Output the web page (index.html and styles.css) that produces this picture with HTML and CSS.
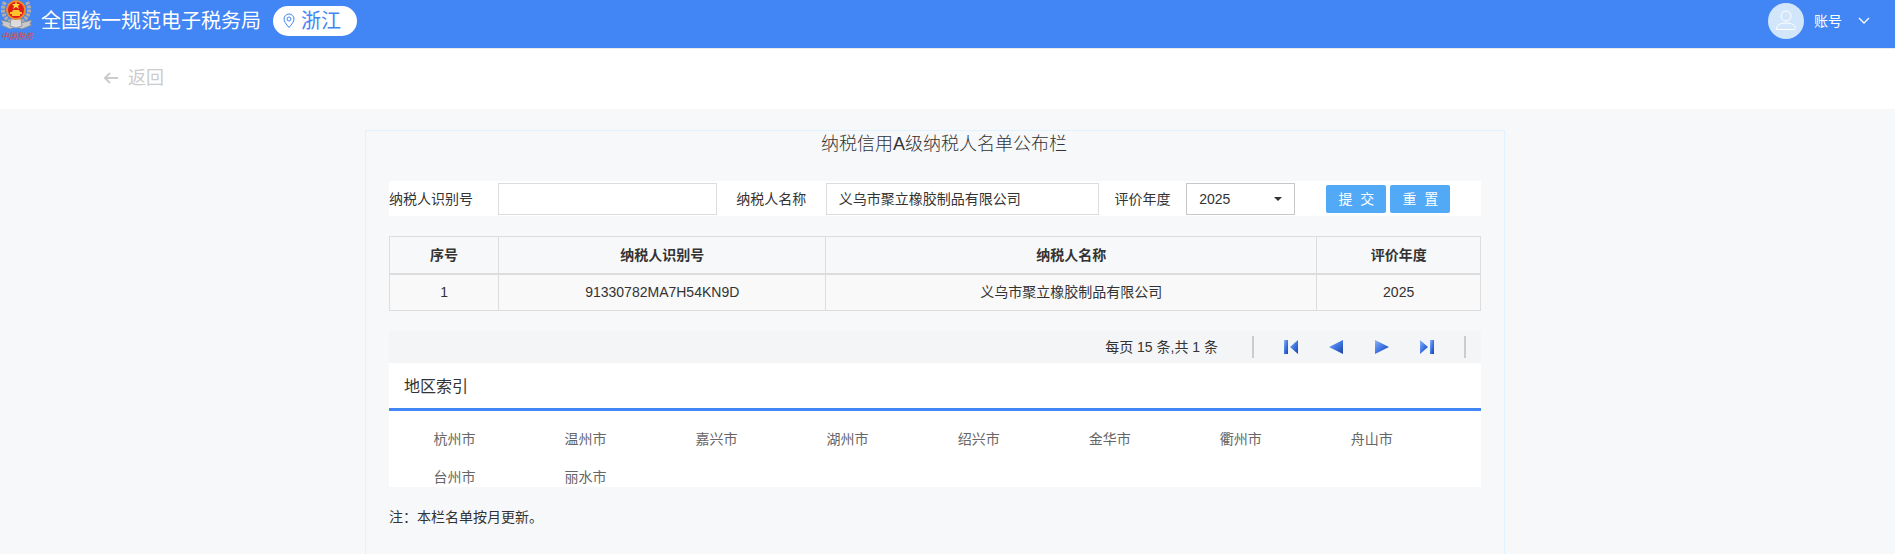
FILE: index.html
```html
<!DOCTYPE html>
<html lang="zh-CN">
<head>
  <meta charset="UTF-8" />
  <title>纳税信用A级纳税人名单公布栏</title>
  <link rel="stylesheet" href="styles.css">
</head>
<body>

  <header class="header">
    <svg class="emblem" viewBox="0 0 34 42" width="34" height="42">
      <path d="M5 2C0 11 4 20 16 25C28 20 32 11 27 2" fill="none" stroke="#b3aca6" stroke-width="4" stroke-dasharray="3 1" />
      <path d="M1 20l8 2 7 2 8-2 8-2-2 4 2 1-10 4-6-2-6 2-9-4 2-1z" fill="#c9c9cb" stroke="#858b98" stroke-width="1" />
      <path d="M11 19h10l1 7-6 2-6-2z" fill="#dddbd9" stroke="#969aa3" stroke-width="1" />
      <circle cx="16" cy="10" r="9" fill="#e01e14" stroke="#f08a2b" stroke-width="2" />
      <path d="M16 1l1 3h3l-2 2 1 3-3-2-3 2 1-3-2-2h3z" fill="#ffd83b" />
      <path d="M13 10h6l1 2h2v2h-2v2h-8v-2h-2v-2h2z" fill="#ffc32e" />
      <text class="emblem-text" x="1" y="39">中国税务</text>
    </svg>
    <span class="site-name">全国统一规范电子税务局</span>
    <button class="region" type="button">
      <svg viewBox="0 0 12 16" width="12" height="16" fill="none" stroke="#4285f4">
        <path d="M6 14.500C3 11 1 8.500 1 6a5 5 0 0 1 10 0c0 2.500-2 5-5 8.500z" />
        <circle cx="6" cy="6" r="2" />
      </svg>
      浙江
    </button>
    <button class="account" type="button">
      <svg viewBox="0 0 36 36" width="36" height="36" fill="none" stroke="#fff">
        <circle cx="18" cy="18" r="18" fill="#d2e6fb" stroke="none" />
        <circle cx="18" cy="13" r="5" />
        <path d="M8.500 26.500v-1c0-3.500 4-5.500 9.500-5.500s9.500 2 9.500 5.500c0 .7-.3 1-1 1h-17c-.7 0-1-.3-1-1z" />
      </svg>
      <span>账号</span>
      <svg class="chevron" viewBox="0 0 12 8" width="12" height="8" fill="none" stroke="#fff" stroke-width="1.300">
        <path d="M1 1l5 5 5-5" />
      </svg>
    </button>
  </header>

  <nav class="back-bar">
    <a href="#" class="back">
      <svg viewBox="0 0 14 12" width="14" height="12" fill="none" stroke="#ccc" stroke-width="2">
        <path d="M14 6H1M6 1L1 6l5 5" />
      </svg>
      返回
    </a>
  </nav>

  <main class="container">
    <div class="panel">
      <h1>纳税信用A级纳税人名单公布栏</h1>

      <form class="search">
        <label class="first" for="nsrsbh">纳税人识别号</label>
        <input type="text" id="nsrsbh" />
        <label for="nsrmc">纳税人名称</label>
        <input type="text" id="nsrmc" value="义乌市聚立橡胶制品有限公司" />
        <label for="pjnd">评价年度</label>
        <div class="select-wrap">
          <select id="pjnd">
            <option>2025</option>
            <option>2024</option>
            <option>2023</option>
          </select>
        </div>
        <div class="buttons">
          <button type="button">提&nbsp; 交</button>
          <button type="reset">重&nbsp; 置</button>
        </div>
      </form>

      <table class="result">
        <thead>
          <tr>
            <th class="col-no">序号</th>
            <th class="col-id">纳税人识别号</th>
            <th class="col-name">纳税人名称</th>
            <th class="col-year">评价年度</th>
          </tr>
        </thead>
        <tbody>
          <tr>
            <td>1</td>
            <td>91330782MA7H54KN9D</td>
            <td>义乌市聚立橡胶制品有限公司</td>
            <td>2025</td>
          </tr>
        </tbody>
      </table>

      <div class="pager">
        <span>每页 15 条,共 1 条</span>
        <div class="pager-buttons">
          <svg width="0" height="0" class="defs">
            <linearGradient id="blue" x1="0" y1="0" x2="1" y2="1">
              <stop offset="0" stop-color="#8fb4f5" />
              <stop offset="0.500" stop-color="#3f76e4" />
              <stop offset="1" stop-color="#1c419c" />
            </linearGradient>
          </svg>
          <button type="button" aria-label="首页">
            <svg viewBox="0 0 14 14" width="14" height="14" fill="url(#blue)"><path d="M0 0h4v14H0z" /><path d="M14 0v14L6 7z" /></svg>
          </button>
          <button type="button" aria-label="上一页">
            <svg viewBox="0 0 14 14" width="14" height="14" fill="url(#blue)"><path d="M14 0v14L0 7z" /></svg>
          </button>
          <button type="button" aria-label="下一页">
            <svg viewBox="0 0 14 14" width="14" height="14" fill="url(#blue)"><path d="M0 0v14l14-7z" /></svg>
          </button>
          <button type="button" aria-label="末页">
            <svg viewBox="0 0 14 14" width="14" height="14" fill="url(#blue)"><path d="M0 0v14l8-7z" /><path d="M10 0h4v14h-4z" /></svg>
          </button>
        </div>
      </div>

      <section class="areas">
        <h2>地区索引</h2>
        <div class="area-list">
          <a href="#">杭州市</a>
          <a href="#">温州市</a>
          <a href="#">嘉兴市</a>
          <a href="#">湖州市</a>
          <a href="#">绍兴市</a>
          <a href="#">金华市</a>
          <a href="#">衢州市</a>
          <a href="#">舟山市</a>
          <a href="#">台州市</a>
          <a href="#">丽水市</a>
        </div>
      </section>

      <p class="note">注：本栏名单按月更新。</p>
    </div>
  </main>

</body>
</html>
```

FILE: styles.css
```css
* {
  box-sizing: border-box;
}
body {
  display: flex;
  flex-direction: column;
  min-height: 100vh;
  margin: 0;
  background: #f7f8fa;
  color: #333;
  font-family: "Liberation Sans", "Noto Sans CJK SC", sans-serif;
  font-size: 14px;
  line-height: 20px;
}
button, input, select {
  font: inherit;
  color: inherit;
}
button {
  border: 0;
  padding: 0;
  background: none;
  cursor: pointer;
}
a {
  color: inherit;
  text-decoration: none;
}
.header {
  display: flex;
  align-items: center;
  height: 48px;
  padding-right: 25px;
  padding-bottom: 6px;
  background: #4285f4;
  color: #fff;
}
.emblem {
  margin-right: 7px;
}
.emblem-text {
  font-size: 8px;
  font-style: italic;
  fill: #e8432f;
}
.site-name {
  font-size: 20px;
}
.region {
  display: flex;
  align-items: center;
  gap: 6px;
  height: 30px;
  margin-left: 12px;
  padding: 0 16px 0 10px;
  border-radius: 15px;
  background: #fff;
  color: #4285f4;
  font-size: 20px;
}
.account {
  display: flex;
  align-items: center;
  gap: 10px;
  margin-left: auto;
}
.chevron {
  margin-left: 6px;
}
.back-bar {
  display: flex;
  align-items: center;
  height: 61px;
  padding-left: 104px;
  padding-bottom: 2px;
  border-top: 1px solid #e8eaee;
  background: #fff;
}
.back {
  display: flex;
  align-items: center;
  gap: 10px;
  color: #ccc;
  font-size: 18px;
}
.container {
  display: flex;
  flex: 1;
  justify-content: center;
  padding: 21px 25px 0 0;
}
.panel {
  width: 100%;
  max-width: 1140px;
  padding: 0 23px;
  border: 1px solid #e0f1ff;
  border-bottom: 0;
}
h1 {
  margin: 0 0 24px;
  padding-left: 18px;
  text-align: center;
  font-size: 18px;
  font-weight: 300;
  line-height: 26px;
}
.search {
  display: grid;
  grid-template-columns: 10% 20% 10% 25% 8% 10% 1fr;
  align-items: center;
  height: 35px;
  background: #fff;
}
.search label {
  text-align: center;
}
.search .first {
  text-align: left;
}
.search input, .search select {
  width: 100%;
  height: 32px;
  padding: 0 12px;
  border: 1px solid #ddd;
  border-radius: 0;
  background: #fff;
}
.search input {
  padding-bottom: 2px;
}
.search select {
  display: block;
  appearance: none;
  border-color: #c8c8c8;
}
.select-wrap {
  position: relative;
}
.select-wrap::after {
  content: "";
  position: absolute;
  top: 14px;
  right: 13px;
  border: 4px solid transparent;
  border-top-color: #333;
  border-bottom: 0;
  pointer-events: none;
}
.buttons {
  display: flex;
  gap: 4px;
  padding-left: 31px;
}
.buttons button {
  width: 60px;
  height: 28px;
  border-radius: 2px;
  background: #52a9f5;
  color: #fff;
}
.result {
  width: 100%;
  margin: 20px 0;
  border-collapse: collapse;
  table-layout: fixed;
}
.result th, .result td {
  height: 37px;
  padding: 0;
  border: 1px solid #ddd;
  text-align: center;
}
.result th {
  border-bottom-width: 2px;
}
.result td {
  background: #f9f9f9;
}
.col-no {
  width: 10%;
}
.col-id {
  width: 30%;
}
.col-name {
  width: 45%;
}
.col-year {
  width: 15%;
}
.pager {
  display: flex;
  justify-content: flex-end;
  align-items: center;
  gap: 34px;
  height: 32px;
  padding-right: 15px;
  background: #f3f5f7;
}
.pager-buttons {
  display: flex;
  justify-content: space-between;
  align-items: center;
  width: 214px;
  height: 22px;
  padding: 0 30px;
  border: 2px solid #ccc;
  border-width: 0 2px;
}
.pager-buttons svg {
  display: block;
}
.pager-buttons .defs {
  position: absolute;
}
.areas {
  background: #fff;
}
h2 {
  margin: 0;
  padding: 2px 15px 0;
  border-bottom: 3px solid #4285f4;
  font-size: 16px;
  font-weight: normal;
  line-height: 43px;
}
.area-list {
  display: grid;
  grid-template-columns: repeat(8, 12%);
  row-gap: 18px;
  padding-top: 18px;
  color: #666;
  text-align: center;
}
.note {
  margin: 20px 0 0;
}
```
